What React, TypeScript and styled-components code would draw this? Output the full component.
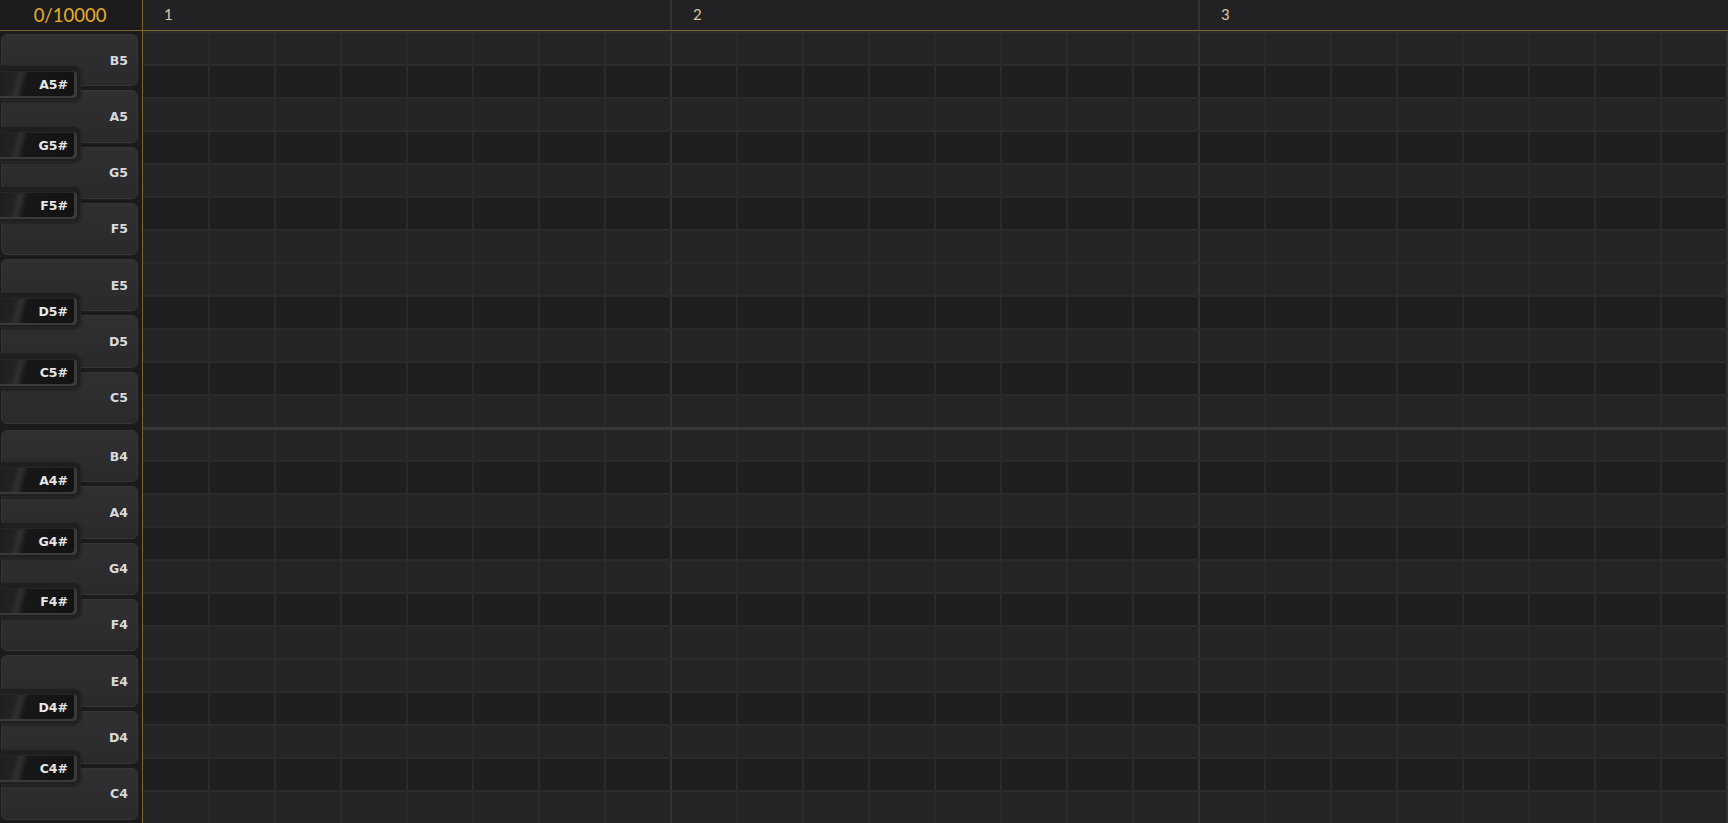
import React from 'react';
import styled, { createGlobalStyle } from 'styled-components';

const GOLD = '#80632a';
const ROW_HEIGHT = 33;
const CELL_WIDTH = 66;
const STEPS_PER_BAR = 8;
const CELL_COUNT = 25;
const BAR_COUNT = 3;

const OCTAVES = [5, 4];
const ROW_NOTES = ['B', 'A#', 'A', 'G#', 'G', 'F#', 'F', 'E', 'D#', 'D', 'C#', 'C'];
const WHITE_KEYS = ['B', 'A', 'G', 'F', 'E', 'D', 'C'];
// centre of each black key, measured from the top of its octave
const BLACK_KEYS = [
  { note: 'A', center: 52 },
  { note: 'G', center: 113 },
  { note: 'F', center: 173 },
  { note: 'D', center: 279 },
  { note: 'C', center: 340 },
];

const GlobalStyle = createGlobalStyle`
  html, body {
    margin: 0;
    padding: 0;
    background: #1b1b1c;
    overflow: hidden;
  }
  #root {
    height: 100vh;
  }
`;

function App() {
  const rows = OCTAVES.flatMap((octave) =>
    ROW_NOTES.map((note, i) => ({
      id: `${note}${octave}`,
      black: note.includes('#'),
      octaveStart: i === 0 && octave !== OCTAVES[0],
    })),
  );

  return (
    <>
      <GlobalStyle />
      <Styled.Layout>
        <Styled.Counter>0/10000</Styled.Counter>
        <Styled.Ruler>
          {Array.from({ length: BAR_COUNT }, (_, i) => (
            <Styled.BarLabel key={i} $first={i === 0}>
              {i + 1}
            </Styled.BarLabel>
          ))}
        </Styled.Ruler>

        <Styled.Keyboard>
          {OCTAVES.map((octave) => (
            <Styled.Octave key={octave}>
              {WHITE_KEYS.map((note) => (
                <Styled.WhiteKey key={note}>
                  {note}
                  {octave}
                </Styled.WhiteKey>
              ))}
              {BLACK_KEYS.map((key) => (
                <Styled.BlackKey key={key.note} $top={key.center - 17}>
                  <Styled.BlackKeyBody>
                    {key.note}
                    {octave}#
                  </Styled.BlackKeyBody>
                </Styled.BlackKey>
              ))}
            </Styled.Octave>
          ))}
        </Styled.Keyboard>

        <Styled.Roll>
          {rows.map((row) => (
            <Styled.Row key={row.id} $black={row.black} $octaveStart={row.octaveStart}>
              {Array.from({ length: CELL_COUNT }, (_, i) => (
                <Styled.Cell key={i} $first={i === 0} $barStart={i % STEPS_PER_BAR === 0} />
              ))}
            </Styled.Row>
          ))}
        </Styled.Roll>
      </Styled.Layout>
    </>
  );
}

export default App;

const Styled = {
  Layout: styled.div`
    display: grid;
    grid-template-columns: 142px 1fr;
    grid-template-rows: 31px 1fr;
    height: 100vh;
    overflow: hidden;
  `,
  Counter: styled.div`
    display: flex;
    align-items: center;
    justify-content: center;
    box-sizing: border-box;
    padding-right: 2px;
    border-bottom: 1px solid ${GOLD};
    background: #1c1c1e;
    color: #e9ae2a;
    font-family: Lato, 'Open Sans', sans-serif;
    font-size: 18.5px;
  `,
  Ruler: styled.div`
    display: flex;
    box-sizing: border-box;
    overflow: hidden;
    border-left: 1px solid ${GOLD};
    border-bottom: 1px solid ${GOLD};
    background: #222224;
  `,
  BarLabel: styled.div<{ $first: boolean }>`
    flex: none;
    box-sizing: border-box;
    width: ${({ $first }) => ($first ? CELL_WIDTH * STEPS_PER_BAR - 1 : CELL_WIDTH * STEPS_PER_BAR)}px;
    padding-left: 21px;
    border-left: ${({ $first }) => ($first ? 'none' : '2px solid #333336')};
    color: #dac7a0;
    font-family: Lato, 'Open Sans', sans-serif;
    font-size: 15px;
    font-weight: 400;
    line-height: 29px;
  `,
  Keyboard: styled.div`
    display: flex;
    flex-direction: column;
    overflow: hidden;
    background: #1b1b1c;
  `,
  Octave: styled.div`
    position: relative;
    display: flex;
    flex-direction: column;
    flex: none;
    box-sizing: border-box;
    height: ${ROW_HEIGHT * 12}px;
    padding: 1px 0;
  `,
  WhiteKey: styled.div`
    display: flex;
    flex: 1;
    align-items: center;
    justify-content: flex-end;
    margin: 2px 4px 2px 1px;
    padding-right: 9px;
    border: 1px solid #353537;
    border-radius: 6px;
    background: linear-gradient(to bottom, #302f31, #2a2a2c);
    color: #dadada;
    font-family: 'DejaVu Sans', Verdana, sans-serif;
    font-size: 12.5px;
    font-weight: 700;
  `,
  BlackKey: styled.div<{ $top: number }>`
    position: absolute;
    top: ${({ $top }) => $top}px;
    left: 0;
    box-sizing: border-box;
    width: 81px;
    height: 35px;
    padding: 5px 4px 3px 0;
    border-radius: 0 8px 8px 0;
    background: #1f1f20;
    box-shadow: 0 1px 3px rgba(0, 0, 0, 0.45), inset -1px -1px 0 #262627;
  `,
  BlackKeyBody: styled.div`
    display: flex;
    align-items: center;
    justify-content: flex-end;
    height: 100%;
    margin-left: -6px;
    padding-right: 9px;
    border-radius: 4px;
    background: linear-gradient(105deg, #1c1c1c 0%, #222 24%, #303031 31%, #171717 39%, #121212 100%);
    box-shadow: inset -3px -2px 0 #3a3a3b, inset 0 1px 0 #262626;
    color: #e6e6e6;
    font-family: 'DejaVu Sans', Verdana, sans-serif;
    font-size: 12.5px;
    font-weight: 700;
  `,
  Roll: styled.div`
    display: flex;
    flex-direction: column;
    overflow: hidden;
    border-left: 1px solid ${GOLD};
  `,
  Row: styled.div<{ $black: boolean; $octaveStart: boolean }>`
    display: flex;
    flex: none;
    box-sizing: border-box;
    height: ${ROW_HEIGHT}px;
    border-top: ${({ $octaveStart }) => ($octaveStart ? '3px solid #38383b' : '2px solid #2b2b2e')};
    background: ${({ $black }) => ($black ? '#1f1f21' : '#252527')};
  `,
  Cell: styled.div<{ $first: boolean; $barStart: boolean }>`
    flex: none;
    box-sizing: border-box;
    width: ${({ $first }) => ($first ? CELL_WIDTH - 1 : CELL_WIDTH)}px;
    border-left: ${({ $first, $barStart }) =>
      $first ? 'none' : `2px solid ${$barStart ? '#333336' : '#2a2a2d'}`};
  `,
};
